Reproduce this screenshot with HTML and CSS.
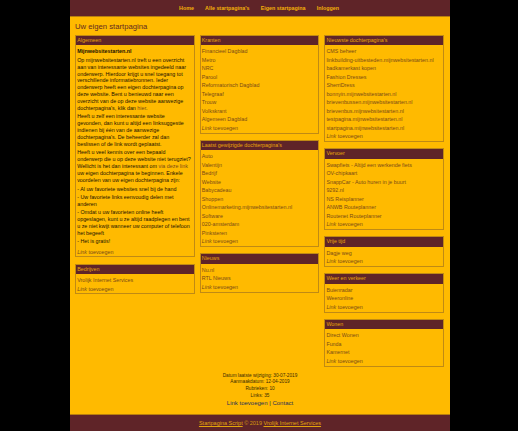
FILE: index.html
```html
<!DOCTYPE html>
<html lang="nl">
<head>
<meta charset="utf-8">
<title>Uw eigen startpagina</title>
<link rel="stylesheet" href="styles.css">
</head>
<body>
<div class="page">
  <nav class="nav">
    <a href="#">Home</a><a href="#">Alle startpagina's</a><a href="#">Eigen startpagina</a><a href="#">Inloggen</a>
  </nav>
  <main class="main">
    <h1 class="title">Uw eigen startpagina</h1>
    <div class="columns">
      <div class="col">
        <section class="panel">
          <h2>Algemeen</h2>
          <div class="intro">
            <p><b>Mijnwebsitestarten.nl</b></p>
            <p>Op mijnwebsitestarten.nl treft u een overzicht aan van interessante websites ingedeeld naar onderwerp. Hierdoor krijgt u snel toegang tot verschillende informatiebronnen. Ieder onderwerp heeft een eigen dochterpagina op deze website. Bent u benieuwd naar een overzicht van de op deze website aanwezige dochterpagina's, klik dan <a href="#">hier</a>.</p>
            <p>Heeft u zelf een interessante website gevonden, dan kunt u altijd een linksuggestie indienen bij één van de aanwezige dochterpagina's. De beheerder zal dan beslissen of de link wordt geplaatst.</p>
            <p>Heeft u veel kennis over een bepaald onderwerp die u op deze website niet terugziet? Wellicht is het dan interessant om <a href="#">via deze link</a> uw eigen dochterpagina te beginnen. Enkele voordelen van uw eigen dochterpagina zijn:</p>
            <p>- Al uw favoriete websites snel bij de hand</p>
            <p>- Uw favoriete links eenvoudig delen met anderen</p>
            <p>- Omdat u uw favorieten online heeft opgeslagen, kunt u ze altijd raadplegen en bent u ze niet kwijt wanneer uw computer of telefoon het begeeft</p>
            <p>- Het is gratis!</p>
          </div>
          <ul><li><a href="#"><i>Link</i> toevoegen</a></li></ul>
        </section>
        <section class="panel">
          <h2>Bedrijven</h2>
          <ul>
            <li><a href="#">Vrolijk Internet Services</a></li>
            <li><a href="#"><i>Link</i> toevoegen</a></li>
          </ul>
        </section>
      </div>
      <div class="col">
        <section class="panel">
          <h2>Kranten</h2>
          <ul>
            <li><a href="#">Financieel Dagblad</a></li>
            <li><a href="#">Metro</a></li>
            <li><a href="#">NRC</a></li>
            <li><a href="#">Parool</a></li>
            <li><a href="#">Reformatorisch Dagblad</a></li>
            <li><a href="#">Telegraaf</a></li>
            <li><a href="#">Trouw</a></li>
            <li><a href="#">Volkskrant</a></li>
            <li><a href="#">Algemeen Dagblad</a></li>
            <li><a href="#"><i>Link</i> toevoegen</a></li>
          </ul>
        </section>
        <section class="panel">
          <h2>Laatst gewijzigde dochterpagina's</h2>
          <ul>
            <li><a href="#">Auto</a></li>
            <li><a href="#">Valentijn</a></li>
            <li><a href="#">Bedrijf</a></li>
            <li><a href="#">Website</a></li>
            <li><a href="#">Babycadeau</a></li>
            <li><a href="#">Shoppen</a></li>
            <li><a href="#">Onlinemarketing.mijnwebsitestarten.nl</a></li>
            <li><a href="#">Software</a></li>
            <li><a href="#">020-amsterdam</a></li>
            <li><a href="#">Pinksteren</a></li>
            <li><a href="#"><i>Link</i> toevoegen</a></li>
          </ul>
        </section>
        <section class="panel">
          <h2>Nieuws</h2>
          <ul>
            <li><a href="#">Nu.nl</a></li>
            <li><a href="#">RTL Nieuws</a></li>
            <li><a href="#"><i>Link</i> toevoegen</a></li>
          </ul>
        </section>
      </div>
      <div class="col">
        <section class="panel">
          <h2>Nieuwste dochterpagina's</h2>
          <ul>
            <li><a href="#">CMS beheer</a></li>
            <li><a href="#">linkbuilding-uitbesteden.mijnwebsitestarten.nl</a></li>
            <li><a href="#">badkamerkast kopen</a></li>
            <li><a href="#">Fashion Dresses</a></li>
            <li><a href="#">SherriDress</a></li>
            <li><a href="#">bonnyin.mijnwebsitestarten.nl</a></li>
            <li><a href="#">brievenbussen.mijnwebsitestarten.nl</a></li>
            <li><a href="#">brievenbus.mijnwebsitestarten.nl</a></li>
            <li><a href="#">testpagina.mijnwebsitestarten.nl</a></li>
            <li><a href="#">startpagina.mijnwebsitestarten.nl</a></li>
            <li><a href="#"><i>Link</i> toevoegen</a></li>
          </ul>
        </section>
        <section class="panel">
          <h2>Vervoer</h2>
          <ul>
            <li><a href="#">Swapfiets - Altijd een werkende fiets</a></li>
            <li><a href="#">OV-chipkaart</a></li>
            <li><a href="#">SnappCar - Auto huren in je buurt</a></li>
            <li><a href="#">9292.nl</a></li>
            <li><a href="#">NS Reisplanner</a></li>
            <li><a href="#">ANWB Routeplanner</a></li>
            <li><a href="#">Routenet Routeplanner</a></li>
            <li><a href="#"><i>Link</i> toevoegen</a></li>
          </ul>
        </section>
        <section class="panel">
          <h2>Vrije tijd</h2>
          <ul>
            <li><a href="#">Dagje weg</a></li>
            <li><a href="#"><i>Link</i> toevoegen</a></li>
          </ul>
        </section>
        <section class="panel">
          <h2>Weer en verkeer</h2>
          <ul>
            <li><a href="#">Buienradar</a></li>
            <li><a href="#">Weeronline</a></li>
            <li><a href="#"><i>Link</i> toevoegen</a></li>
          </ul>
        </section>
        <section class="panel">
          <h2>Wonen</h2>
          <ul>
            <li><a href="#">Direct Wonen</a></li>
            <li><a href="#">Funda</a></li>
            <li><a href="#">Kamernet</a></li>
            <li><a href="#"><i>Link</i> toevoegen</a></li>
          </ul>
        </section>
      </div>
    </div>
    <div class="meta">
      <div>Datum laatste wijziging: 30-07-2019</div>
      <div>Aanmaakdatum: 12-04-2019</div>
      <div>Rubrieken: 10</div>
      <div>Links: 35</div>
      <div class="meta-links"><a href="#">Link toevoegen</a> | <a href="#">Contact</a></div>
    </div>
  </main>
  <footer class="footer">
    <a href="#">Startpagina Script</a> © 2019 <a href="#">Vrolijk Internet Services</a>
  </footer>
</div>
</body>
</html>
```
FILE: styles.css
```css
* { box-sizing: border-box; }
html, body { margin: 0; padding: 0; height: 100%; }
body {
  background: #000;
  font-family: "Liberation Sans", Arial, sans-serif;
  font-size: 5.35px;
  color: #1c1200;
}
a { color: inherit; text-decoration: none; }
.page {
  width: 380px;
  height: 431px;
  margin-left: 70px;
  background: #ffba00;
  display: flex;
  flex-direction: column;
}
.nav {
  height: 17px;
  flex: none;
  background: #5f2428;
  border-bottom: 1px solid #b77f10;
  display: flex;
  justify-content: center;
  align-items: center;
  gap: 11.2px;
  padding-right: 2px;
  font-weight: bold;
  color: #f4b107;
}
.main { flex: 1; padding: 5px 5px 0; display: flex; flex-direction: column; }
.title {
  margin: 0;
  height: 13px;
  font-size: 7.7px;
  font-weight: normal;
  line-height: 10px;
  color: #5f2a20;
}
.columns { display: flex; gap: 5px; height: 337.6px; }
.col { width: 119.6px; flex: none; display: flex; flex-direction: column; gap: 6.3px; }
.panel { border: 1px solid #c08a14; }
.panel h2 {
  margin: 0;
  height: 9.3px;
  background: #5f2428;
  color: #e8a60a;
  font-size: 5.35px;
  font-weight: normal;
  line-height: 9.3px;
  padding-left: 1.2px;
}
.panel ul { list-style: none; margin: 0; padding: 2px 1.2px 0.4px; }
.panel li { height: 8.5px; line-height: 8.5px; white-space: nowrap; color: #7a4a17; }
.panel li a { color: #7a4a17; }
.intro { padding: 3px 2.4px 0 1.2px; line-height: 6.9px; color: #1c1200; }
.intro p { margin: 0 0 1.5px; }
.intro a { color: #7a4a17; }
.intro + ul { padding-top: 0.8px; }
.meta {
  text-align: center;
  font-size: 4.7px;
  line-height: 6.75px;
  color: #3a2a05;
}
.meta-links { font-size: 6px; color: #2a2c50; line-height: 7.5px; }
.meta-links a { color: #1f2f5a; }
.footer {
  height: 17px;
  flex: none;
  background: #5f2428;
  border-top: 1px solid #b77f10;
  display: flex;
  justify-content: center;
  align-items: center;
  gap: 1.5px;
  color: #d6990c;
  font-size: 5.5px;
}
.footer a { text-decoration: underline; color: #e3a40b; }
```
